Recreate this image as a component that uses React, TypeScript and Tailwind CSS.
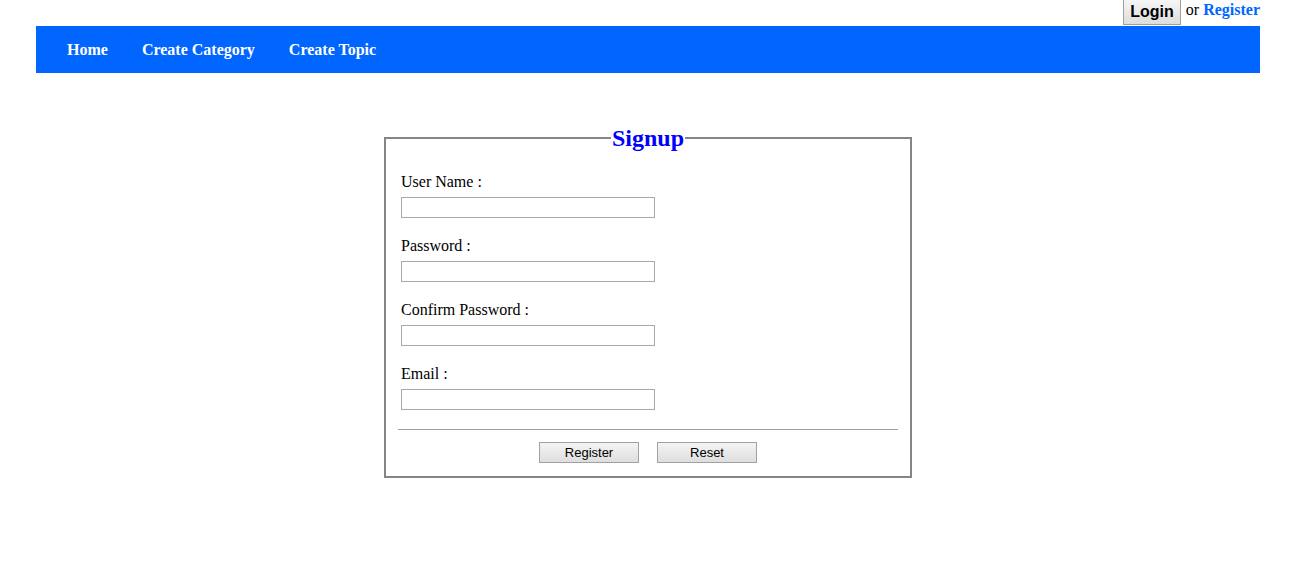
import React from "react";

const serif = "font-['Times_New_Roman','Liberation_Serif',serif]";

function Field({ label, type = "text" }: { label: string; type?: string }) {
  return (
    <div className="flex flex-col">
      <label className="h-[18px] leading-[18px] text-[16px] text-black">{label}</label>
      <input
        type={type}
        className="mt-[6px] w-[254px] h-[21px] border border-[#a9a9a9] bg-white outline-none"
      />
    </div>
  );
}

export default function App() {
  return (
    <div className={`${serif} w-[1298px] h-[581px] bg-white`}>
      <div className="ml-[36px] w-[1224px]">
        <div className="flex justify-end items-start h-[26px]">
          <button className="h-[25px] px-[6px] border border-[#a0a0a0] border-t-0 bg-gradient-to-b from-[#f6f6f6] to-[#dddddd] font-['Arial','Liberation_Sans',sans-serif] font-bold text-[16px] leading-[18px] text-black">
            Login
          </button>
          <span className="ml-[5px] mt-[1px] text-[16px] leading-[18px] text-black">or</span>
          <a className="ml-[4px] mt-[1px] text-[16px] leading-[18px] font-bold text-[#0066ff]">Register</a>
        </div>
        <nav className="h-[47px] bg-[#0066ff] flex items-center pl-[31px] gap-[34px]">
          <a className="text-white font-bold text-[16px]">Home</a>
          <a className="text-white font-bold text-[16px]">Create Category</a>
          <a className="text-white font-bold text-[16px]">Create Topic</a>
        </nav>
      </div>
      <fieldset className="ml-[384px] mt-[51px] w-[528px] border-2 border-[#858585] px-[15px] pb-[13px]">
        <legend className="mx-auto px-[1px] text-[24px] leading-[28px] font-bold text-[#0000ff]">
          Signup
        </legend>
        <div className="flex flex-col gap-[19px] pt-[21px]">
          <Field label="User Name :" />
          <Field label="Password :" type="password" />
          <Field label="Confirm Password :" type="password" />
          <Field label="Email :" />
        </div>
        <div className="mt-[19px] -mx-[3px] border-t border-[#a0a0a0]" />
        <div className="flex justify-center gap-[18px] mt-[12px]">
          <button className="w-[100px] h-[21px] border border-[#a0a0a0] bg-gradient-to-b from-[#f4f4f4] to-[#dedede] font-['Arial','Liberation_Sans',sans-serif] text-[13px] leading-[15px] text-black">
            Register
          </button>
          <button className="w-[100px] h-[21px] border border-[#a0a0a0] bg-gradient-to-b from-[#f4f4f4] to-[#dedede] font-['Arial','Liberation_Sans',sans-serif] text-[13px] leading-[15px] text-black">
            Reset
          </button>
        </div>
      </fieldset>
    </div>
  );
}
